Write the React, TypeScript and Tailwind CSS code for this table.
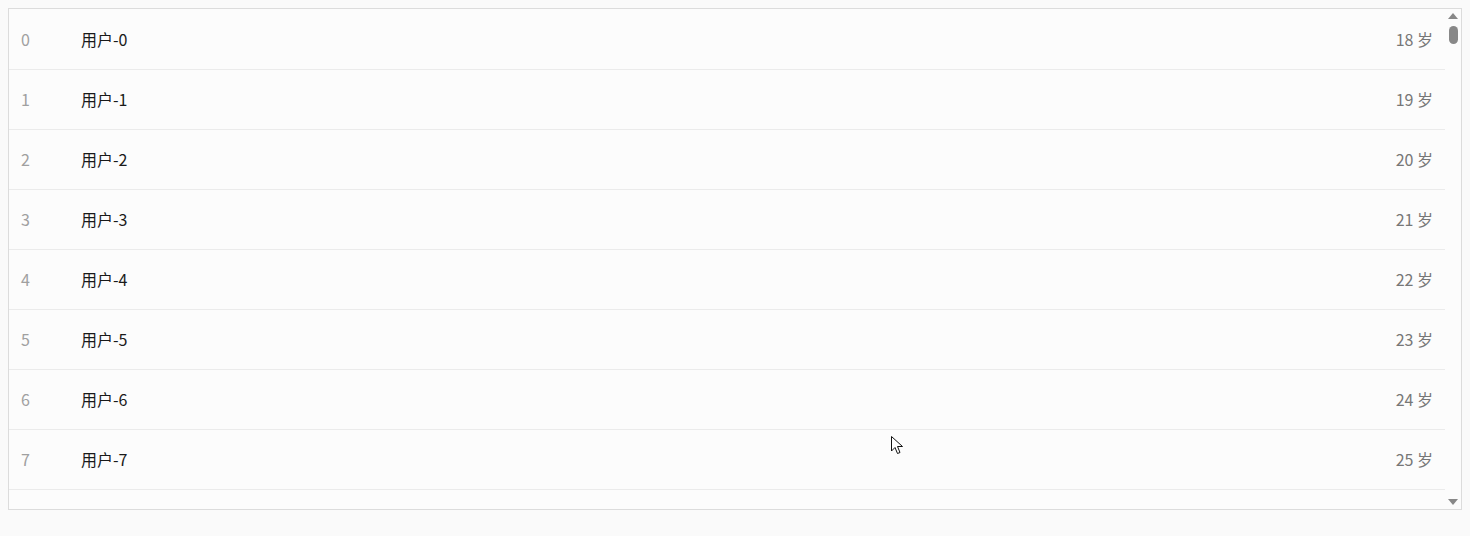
import React from 'react';

const users = Array.from({ length: 8 }, (_, i) => ({
    id: i,
    name: `用户-${i}`,
    age: 18 + i,
}));

const App: React.FC = () => {
    return (
        <main className="relative min-h-screen bg-[#fafafa] p-2 font-['Noto_Sans_CJK_SC',sans-serif]">
            {/* Virtual list */}
            <div className="flex h-[502px] border border-[#dcdcdc] bg-[#fcfcfc]">
                <div className="flex-1 overflow-hidden pt-px">
                    {users.map((user) => (
                        <div
                            key={user.id}
                            className="flex h-[60px] items-center border-b border-[#ebebeb] px-3 pb-[2px] text-base"
                        >
                            <span className="w-[60px] text-[#a0a0a0]">{user.id}</span>
                            <span className="flex-1 text-[#1a1a1a]">{user.name}</span>
                            <span className="text-[#777777]">{user.age} 岁</span>
                        </div>
                    ))}
                </div>

                {/* Scrollbar */}
                <div className="flex w-4 flex-col items-center pt-[4px] pb-[4px]">
                    <div className="h-0 w-0 border-x-[5px] border-b-[6px] border-x-transparent border-b-[#888888]"></div>
                    <div className="mt-[7px] h-[18px] w-[9px] rounded-full bg-[#888888]"></div>
                    <div className="flex-1"></div>
                    <div className="h-0 w-0 border-x-[5px] border-t-[6px] border-x-transparent border-t-[#888888]"></div>
                </div>
            </div>

            {/* Mouse cursor */}
            <svg
                className="absolute left-[891px] top-[436px]"
                width="13"
                height="20"
                viewBox="0 0 13 20"
            >
                <path
                    d="M0.5 0.5 L0.5 15 L4 11.5 L6.5 17.5 L9 16.5 L6.5 10.5 L11.5 10.5 Z"
                    fill="#ffffff"
                    stroke="#111111"
                    strokeWidth="1"
                    strokeLinejoin="round"
                />
            </svg>
        </main>
    );
};

export default App;
